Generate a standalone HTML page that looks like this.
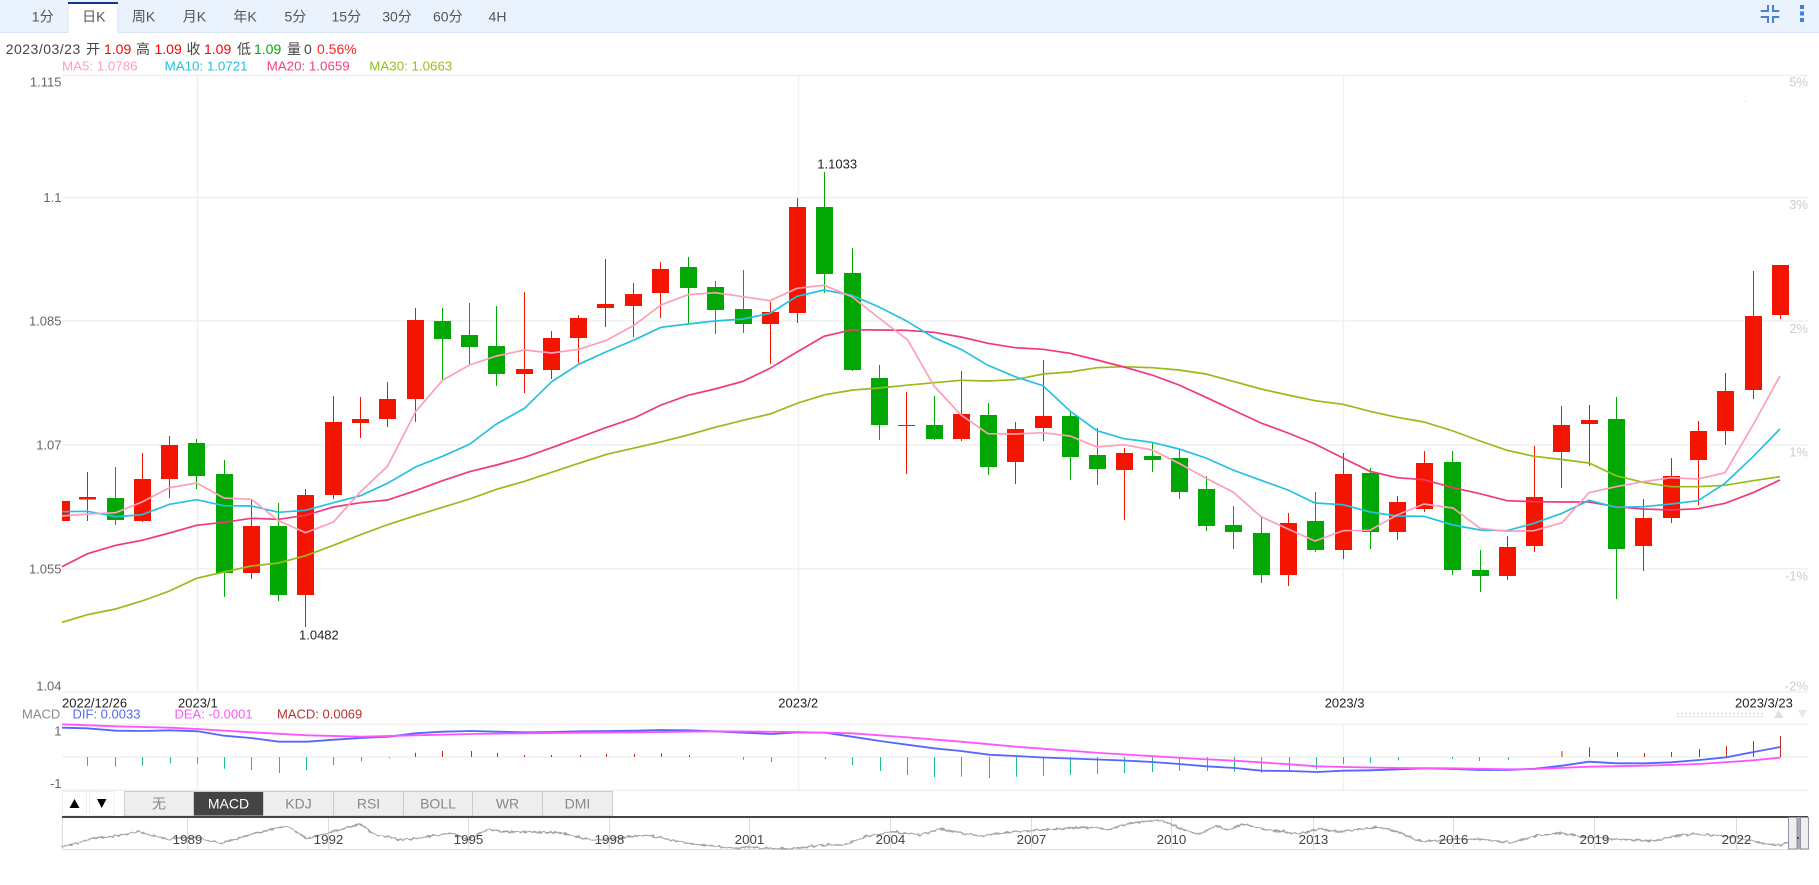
<!DOCTYPE html>
<html lang="zh">
<head>
<meta charset="utf-8">
<title>K线图</title>
<style>
html,body{margin:0;padding:0;background:#fff;width:1819px;height:885px;overflow:hidden}
svg{display:block;position:absolute;left:0;top:0}
text{font-family:"Liberation Sans","Noto Sans CJK SC",sans-serif;font-size:13px;fill:#555}
.tab{font-size:14px;fill:#555;text-anchor:middle}
.info{font-size:14px;fill:#444}
.r{fill:#f00}
.g{fill:#0a0}
.ma{font-size:13.33px}
.ax{text-anchor:end;fill:#666}
.pc{text-anchor:end;fill:#ccc}
.dt{fill:#222}
.btn{font-size:14px;text-anchor:middle;fill:#888}
.nav{text-anchor:middle;fill:#444;font-size:13.33px}
</style>
</head>
<body>
<svg width="1819" height="885" viewBox="0 0 1819 885" xmlns="http://www.w3.org/2000/svg">
<defs>
<filter id="rough" x="-2%" y="-40%" width="104%" height="180%">
<feTurbulence type="fractalNoise" baseFrequency="0.22" numOctaves="2" seed="4"/>
<feDisplacementMap in="SourceGraphic" scale="4" xChannelSelector="R" yChannelSelector="G"/>
</filter>
</defs>

<!-- top bar -->
<rect x="0" y="0" width="1819" height="32" fill="#eaf2fe"/>
<rect x="0" y="32" width="1819" height="1" fill="#d9e4f7"/>
<rect x="68" y="2" width="50" height="31" fill="#fff"/>
<rect x="67.5" y="4" width="1" height="29" fill="#d9e4f7"/>
<rect x="117.5" y="4" width="1" height="29" fill="#d9e4f7"/>
<rect x="68" y="2" width="50" height="2" fill="#0c3a8e"/>
<text class="tab" x="42.7" y="21.5">1分</text>
<text class="tab" x="93.8" y="21.5">日K</text>
<text class="tab" x="143.5" y="21.5">周K</text>
<text class="tab" x="194.4" y="21.5">月K</text>
<text class="tab" x="245" y="21.5">年K</text>
<text class="tab" x="295.4" y="21.5">5分</text>
<text class="tab" x="346.3" y="21.5">15分</text>
<text class="tab" x="397" y="21.5">30分</text>
<text class="tab" x="447.8" y="21.5">60分</text>
<text class="tab" x="497.5" y="21.5">4H</text>

<!-- top-right icons -->
<path d="M1760.7 11H1768V5M1779.3 11H1773V5M1760.7 17H1768V23M1779.3 17H1773V23" fill="none" stroke="#4a80d6" stroke-width="2"/>
<rect x="1800" y="5" width="4" height="4" fill="#3f7edb"/>
<rect x="1800" y="11.5" width="4" height="4" fill="#3f7edb"/>
<rect x="1800" y="18" width="4" height="4" fill="#3f7edb"/>

<!-- info row -->
<text class="info" x="5.7" y="54" style="letter-spacing:.5px">2023/03/23</text>
<text class="info" x="86" y="54">开</text>
<text class="info r" x="104" y="54">1.09</text>
<text class="info" x="136" y="54">高</text>
<text class="info r" x="154.5" y="54">1.09</text>
<text class="info" x="186.5" y="54">收</text>
<text class="info r" x="204" y="54">1.09</text>
<text class="info" x="237" y="54">低</text>
<text class="info g" x="254" y="54">1.09</text>
<text class="info" x="287" y="54">量</text>
<text class="info" x="304" y="54">0</text>
<text class="info r" x="317" y="54" style="fill:#f22">0.56%</text>

<text class="ma" x="62" y="70.7" style="fill:#ff9dbd">MA5: 1.0786</text>
<text class="ma" x="164.6" y="70.7" style="fill:#22c0e0">MA10: 1.0721</text>
<text class="ma" x="266.7" y="70.7" style="fill:#f0427f">MA20: 1.0659</text>
<text class="ma" x="369.3" y="70.7" style="fill:#96bf1c">MA30: 1.0663</text>

<!-- grid -->
<path d="M62 75.5H1808M62 197.5H1808M62 321H1808M62 445H1808M62 568.7H1808M62 692H1808M62 724.3H1808M62 757H1808M62 790.3H1808" stroke="#f0f0f0" stroke-width="1.6" fill="none"/>
<path d="M197.5 76V692M798.5 76V692M1343.5 76V692M197.5 724V790M798.5 724V790M1343.5 724V790" stroke="#f0f0f0" stroke-width="1.4" fill="none"/>
<rect x="1745" y="101" width="1" height="1" fill="#ccc"/>

<!-- axis labels -->
<text class="ax" x="61.5" y="86.3">1.115</text>
<text class="ax" x="61.5" y="202.2">1.1</text>
<text class="ax" x="61.5" y="325.7">1.085</text>
<text class="ax" x="61.5" y="449.7">1.07</text>
<text class="ax" x="61.5" y="573.4">1.055</text>
<text class="ax" x="61.5" y="690.6">1.04</text>
<text class="pc" x="1808" y="86.3">5%</text>
<text class="pc" x="1808" y="209.2">3%</text>
<text class="pc" x="1808" y="333">2%</text>
<text class="pc" x="1808" y="456.7">1%</text>
<text class="pc" x="1808" y="580.7">-1%</text>
<text class="pc" x="1808" y="690.6">-2%</text>

<!-- red candles -->
<path fill="none" stroke="#f31500" stroke-width="1" d="M87.5 472V521M142.5 453V522M169.5 436V498M251.5 500V579M305.5 489V627M333.5 396V499M360.5 397V438M387.5 382V427M415.5 308V422M524.5 292V393M551.5 331V379M578.5 315V363M605.5 259V327M633.5 283V337M660.5 262V318M770.5 302V364M797.5 198V323M906.5 392V474M961.5 371V441M1015.5 422V484M1043.5 360V441M1124.5 448V520M1288.5 513V586M1343.5 453V559M1397.5 496V540M1424.5 451V512M1507.5 536V580M1534.5 446V552M1561.5 406V488M1589.5 405V466M1643.5 499V571M1671.5 458V523M1698.5 421V505M1725.5 373V445M1753.5 271V399M1780.5 265V319"/>
<path fill="#f31500" d="M62 501h8v20h-8zM79 497h17v2.5h-17zM134 479h17v42h-17zM161 445h17v34h-17zM243 526h17v47h-17zM297 495h17v100h-17zM325 422h17v73h-17zM352 419h17v4h-17zM379 399h17v20h-17zM407 320h17v79h-17zM516 369h17v5h-17zM543 338h17v32h-17zM570 318h17v20h-17zM597 304h17v4h-17zM625 294h17v12h-17zM652 269h17v24h-17zM762 312h17v12h-17zM789 207h17v106h-17zM898 425h17v1h-17zM953 414h17v25h-17zM1007 429h17v33h-17zM1035 416h17v12h-17zM1116 453h17v17h-17zM1280 523h17v52h-17zM1335 474h17v76h-17zM1389 502h17v30h-17zM1416 463h17v46h-17zM1499 547h17v29h-17zM1526 497h17v49h-17zM1553 425h17v27h-17zM1581 420h17v4h-17zM1635 518h17v28h-17zM1663 476h17v42h-17zM1690 431h17v29h-17zM1717 391h17v40h-17zM1745 316h17v74h-17zM1772 265h17v50h-17z"/>

<!-- green candles -->
<path fill="none" stroke="#03a703" stroke-width="1" d="M115.5 467V525M196.5 439V489M224.5 460V597M278.5 503V601M442.5 308V381M469.5 303V364M496.5 306V386M688.5 257V323M715.5 281V334M743.5 270V333M824.5 172V293M852.5 248V371M879.5 365V440M934.5 396V440M988.5 403V475M1070.5 412V480M1097.5 428V485M1152.5 443V472M1179.5 449V499M1206.5 476V531M1233.5 506V549M1261.5 517V583M1315.5 492V552M1370.5 468V549M1452.5 451V575M1480.5 550V592M1616.5 397V599"/>
<path fill="#03a703" d="M107 498h17v22h-17zM188 443h17v33h-17zM216 474h17v99h-17zM270 526h17v69h-17zM434 321h17v18h-17zM461 335h17v12h-17zM488 346h17v28h-17zM680 267h17v21h-17zM707 287h17v23h-17zM735 309h17v15h-17zM816 207h17v67h-17zM844 273h17v97h-17zM871 378h17v47h-17zM926 425h17v14h-17zM980 415h17v52h-17zM1062 416h17v41h-17zM1089 455h17v14h-17zM1144 456h17v4h-17zM1171 458h17v34h-17zM1198 489h17v37h-17zM1225 525h17v7h-17zM1253 533h17v42h-17zM1307 521h17v29h-17zM1362 473h17v59h-17zM1444 462h17v108h-17zM1472 570h17v6h-17zM1608 419h17v130h-17z"/>

<!-- MA lines -->
<polyline fill="none" stroke="#97bc19" stroke-width="1.7" points="62,622.3 87.5,614.7 115.7,609 142,601 169.5,591 196.5,578.3 224,572 251.5,566 278.5,563 305.5,555.7 333.5,545.3 360.5,534.7 387.5,524.7 415.5,515.7 442.5,507.3 469.5,499 496.5,489.3 524.5,481.3 551.7,472.3 578.7,463.3 606.7,454.3 633,448.3 661.7,441.7 688,435 715,427.3 743,420.3 770,414 798,403 825,394.7 853,390 879,388 906,385.3 934,382.7 961,380.3 988,381 1015,379.7 1043,374 1070,372 1097,367.7 1124,366.7 1152,367.7 1179,370 1206,374 1233,381.3 1261,389 1288,395 1315,400.7 1343,404.3 1370,411.3 1397,417.3 1424,422 1453,431 1480,441 1507,450.3 1534,456.3 1562,459.5 1589,463 1616,475.7 1643,482.3 1671,486.7 1698,486.7 1725,485.3 1753,480.7 1780,476.7"/>
<polyline fill="none" stroke="#f0397d" stroke-width="1.7" points="62,566.7 87.5,553.7 115.7,545.3 142,540.3 169.5,533 196.5,525.3 224,522.3 251.5,518.3 278.5,519.3 305.5,515.3 333.5,507 360.5,502.7 387.5,500 415.5,490.7 442.5,480.7 469.5,471.7 496.5,465 524.5,457.3 551.7,447.7 578.7,437.7 605.7,427.7 634,418 661,405 688,395.3 715,389 743,381.3 770,368.3 797,352 824,336.3 852,329.7 879,330 906,330.3 934,332.3 961,337 988,343.3 1015,347.7 1043,349.3 1070,353.3 1097,360 1124,367 1152,375 1179,385 1206,397.3 1233,410 1261,423 1288,433 1315,444 1343,458 1370,471.3 1397,477.7 1424,479.7 1453,487.7 1480,493.7 1507,500.7 1534,501.7 1562,502 1589,502 1616,506.7 1643,509 1671,510 1698,508.7 1725,503.3 1753,492.7 1780,480"/>
<polyline fill="none" stroke="#25c0e3" stroke-width="1.7" points="62,511.7 87.5,511.3 115.7,516.7 142,514.7 169.5,504.3 196.5,499.7 224,505.7 251.5,506 278.5,512.3 305.5,510.3 333.5,502.7 360.5,495.7 387.5,483.3 415.5,467 442.5,456.3 469.5,444.3 496.5,424 524.5,408.3 551.7,381.7 578.7,364.3 605.7,352 634,340 661,327.3 688,324 715,321 743,319 770,313.3 797,296.3 824,290 852,295.3 879,307 906,320.7 934,337.7 961,349.3 988,365.3 1015,376.7 1043,385.7 1070,411 1097,430.7 1124,438.7 1152,442.3 1179,449 1206,458 1233,470 1261,480.3 1288,490 1315,503 1343,504.7 1370,512 1397,516 1424,516.3 1453,525 1480,530 1507,530.7 1534,523.3 1562,513.3 1589,500.3 1616,507.3 1643,506.7 1671,504 1698,500.7 1725,483.3 1753,456.7 1780,429"/>
<polyline fill="none" stroke="#ff9ebb" stroke-width="1.7" points="62,516 87.5,514 115.7,512.7 142,502 169.5,487.7 196.5,483 224,498 251.5,499.3 278.5,520.7 305.5,532.7 333.5,522 360.5,491.7 387.5,466.3 415.5,411.7 442.5,380.3 469.5,365 496.5,356 524.5,350 551.7,353 578.7,349.3 605.7,340.7 634,325.3 661,305 688,294.7 715,292.7 743,296.7 770,300.7 797,288.3 824,285.3 852,296.7 879,318 907.7,340 934,386 961,415 988,433.7 1015,434 1043,432.7 1070,436 1097,447 1124,444.7 1152,450 1179,463.3 1206,478.3 1233,492 1261,516.7 1288,529 1315,541 1343,530.7 1370,530.3 1397,515 1424,504 1453,508 1480,528.3 1507,531.3 1534,530.7 1562,522.7 1589,492.7 1616,486.7 1643,481.7 1671,477.7 1698,479 1725,472.7 1753,425 1780,376"/>

<!-- high / low markers -->
<text class="dt" x="817.3" y="168.6">1.1033</text>
<text class="dt" x="299" y="639.6">1.0482</text>

<!-- x labels -->
<text class="dt" x="62" y="707.4">2022/12/26</text>
<text class="dt" x="178" y="707.4">2023/1</text>
<text class="dt" x="778.3" y="707.4">2023/2</text>
<text class="dt" x="1324.7" y="707.4">2023/3</text>
<text class="dt" x="1735" y="707.4">2023/3/23</text>

<!-- MACD legend -->
<text x="22" y="718.6" style="fill:#888">MACD</text>
<text x="72.5" y="718.6" style="fill:#5566ff">DIF: 0.0033</text>
<text x="174.5" y="718.6" style="fill:#ff55ff">DEA: -0.0001</text>
<text x="277" y="718.6" style="fill:#b83030">MACD: 0.0069</text>
<text class="ax" x="61.5" y="735.3">1</text>
<text class="ax" x="61.5" y="788">-1</text>

<!-- scrollbar dots and arrows -->
<path d="M1677 713.5H1764M1677 716.5H1764" stroke="#ddd" stroke-width="1.5" stroke-dasharray="2 2" fill="none"/>
<path d="M1774 718L1778.7 710L1783.5 718z" fill="#e0e0e0"/>
<path d="M1798 710L1802.5 718L1807 710z" fill="#e8e8e8"/>

<!-- MACD histogram -->
<path fill="none" stroke="#1dbb8d" stroke-width="1" d="M87.5 757V765.7M115.5 757V766.7M142.5 757V765.7M170.5 757V763.3M197.5 757V763.7M224.5 757V768.7M251.5 757V770M279.5 757V773M306.5 757V770.3M333.5 757V765M361.5 757V761.3M389.5 757V758.3M743.5 757V759.7M771.5 757V762M825.5 757V759M852.5 757V765M880.5 757V771M907.5 757V775M934.5 757V777M961.5 757V776.7M989.5 757V778M1016.5 757V776.7M1043.5 757V776M1070.5 757V775M1097.5 757V774M1124.5 757V773M1152.5 757V772M1179.5 757V771M1207.5 757V771M1234.5 757V771.7M1261.5 757V772.7M1289.5 757V770M1316.5 757V769.3M1343.5 757V764M1370.5 757V763M1398.5 757V760.3M1452.5 757V759M1479.5 757V761M1508.5 757V760"/>
<path fill="none" stroke="#c03020" stroke-width="1" d="M415.5 757V752.7M442.5 757V751M471.5 757V751M497.5 757V752.7M524.5 757V755M551.5 757V755M580.5 757V755M606.5 757V754M634.5 757V754M661.5 757V753.3M689.5 757V755M1562 757V751M1589.5 757V747.3M1617.5 757V752M1644.5 757V753M1671.5 757V752M1699.5 757V749M1726.5 757V746M1753.5 757V741M1780.5 757V736"/>

<!-- MACD lines -->
<polyline fill="none" stroke="#5566ff" stroke-width="1.8" points="62,727.7 87,728.3 116,730.7 143,731 170,730.3 198,731.3 224,735.7 251,738 279,741.7 307,741.7 334,739.7 361.5,738 389,736.7 415,733.3 442.5,731.7 471,731 497.5,731.7 524.5,732.3 551.4,732 580,731.3 607,731 634,730.7 661,730 688,730.3 715,731.3 743,732.7 771.7,734 798,732.3 825,732.7 852,736.7 880,741 907,744.7 934,748.3 961,751 989,754.7 1016,756 1043,757.5 1070,758.5 1097,759.5 1124,760.5 1152,762 1179,764 1206,766.3 1234.7,768 1261.6,770.7 1289.6,771 1316.9,772 1343.3,770.7 1370.5,770.3 1398.6,769.3 1425,768.3 1452.7,769 1479.5,770 1508,770 1535.6,768.7 1562,765.7 1589,761.7 1617,763.3 1644,763.3 1671,762.3 1699.4,760 1726.3,757.3 1753.5,752 1780.3,747"/>
<polyline fill="none" stroke="#ff55ff" stroke-width="1.8" points="62,724.3 116,726.3 170,727.7 198,729 251,732.3 307,735.3 361.5,736.7 415,735.3 471,734 524.5,733.3 580,732.7 634,732.3 715,731.3 798,732 852,733.3 907,737.3 961,741.7 1016,746.7 1100,753 1200,759 1234.7,760.7 1289.6,764.3 1316.9,766.3 1343.3,767 1398.6,768 1452.7,768.3 1508,769.3 1535.6,769 1589,766.7 1644,765.7 1699.4,764 1753.5,760.3 1780.3,757.7"/>

<!-- indicator buttons -->
<rect x="62.5" y="791.5" width="24" height="24" fill="#fff" stroke="#f0f0f0"/>
<rect x="89.5" y="791.5" width="24.5" height="24" fill="#fff" stroke="#f0f0f0"/>
<path d="M69.5 808L74.5 799L79.5 808z" fill="#000"/>
<path d="M97 799L101.7 808L106.5 799z" fill="#000"/>
<g stroke="#ccc" stroke-width="1">
<rect x="124.5" y="791.5" width="69" height="24.5" fill="#eee"/>
<rect x="263.5" y="791.5" width="70" height="24.5" fill="#eee"/>
<rect x="333.5" y="791.5" width="70" height="24.5" fill="#eee"/>
<rect x="403.5" y="791.5" width="69" height="24.5" fill="#eee"/>
<rect x="472.5" y="791.5" width="70" height="24.5" fill="#eee"/>
<rect x="542.5" y="791.5" width="70" height="24.5" fill="#eee"/>
<rect x="193.5" y="791.5" width="70" height="24.5" fill="#444"/>
</g>
<text class="btn" x="159" y="808.6">无</text>
<text class="btn" x="228.5" y="808.6" style="fill:#fff">MACD</text>
<text class="btn" x="298.5" y="808.6">KDJ</text>
<text class="btn" x="368.5" y="808.6">RSI</text>
<text class="btn" x="438" y="808.6">BOLL</text>
<text class="btn" x="507.5" y="808.6">WR</text>
<text class="btn" x="577.5" y="808.6">DMI</text>

<!-- navigator -->
<rect x="62" y="816" width="1746" height="2" fill="#444"/>
<path d="M62.5 818V849.5H1808M187.5 818V849M328.5 818V849M468.5 818V849M609.5 818V849M749.5 818V849M890.5 818V849M1031.5 818V849M1171.5 818V849M1313.5 818V849M1453.5 818V849M1594.5 818V849M1736.5 818V849" fill="none" stroke="#ddd" stroke-width="1"/>
<g filter="url(#rough)">
<polyline fill="none" stroke="#a4a4a4" stroke-width="1.5" points="62,846.7 79,843.3 93,837.7 112,836.7 139,831.7 166,839.3 195,837.3 220,843.3 249,835 286,826 307,838.3 332,831.7 361,824 373,834 402,840 450,833.3 468.5,839.3 489,829 502,831.7 557,832.3 593,840 647,835 687,843.3 733,848.3 753,847.3 787,849 823,845 843,845 867,836 893,831.7 920,835 940,829 980,836 1010,832 1040,830 1080,827 1110,829 1130,823 1160,820 1175,826 1190,832 1200,834 1216,826 1228,830 1243,824 1259,828 1275,830.7 1299,834 1318,829 1338,831.7 1378,827 1401,833 1421,841.7 1453,839.3 1476,838.7 1512,842.7 1539.5,835 1559,833 1583,836.7 1614.5,839 1654,841 1674,836 1693.5,834 1713,835 1733,836.7 1760.6,842.7 1780,845.7 1788,841.7"/>
</g>
<text class="nav" x="187.5" y="844">1989</text>
<text class="nav" x="328.5" y="844">1992</text>
<text class="nav" x="468.5" y="844">1995</text>
<text class="nav" x="609.5" y="844">1998</text>
<text class="nav" x="749.5" y="844">2001</text>
<text class="nav" x="890.5" y="844">2004</text>
<text class="nav" x="1031.5" y="844">2007</text>
<text class="nav" x="1171.5" y="844">2010</text>
<text class="nav" x="1313.5" y="844">2013</text>
<text class="nav" x="1453.5" y="844">2016</text>
<text class="nav" x="1594.5" y="844">2019</text>
<text class="nav" x="1736.5" y="844">2022</text>

<!-- navigator handles -->
<rect x="1797" y="817" width="3" height="32" fill="#aaa"/>
<rect x="1788.5" y="817.5" width="8.5" height="31.5" fill="#eee" stroke="#8f93a3"/>
<rect x="1800.5" y="817.5" width="8" height="31.5" fill="#eee" stroke="#8f93a3"/>
<rect x="1797" y="837" width="2" height="2" fill="#555"/>
</svg>
</body>
</html>
